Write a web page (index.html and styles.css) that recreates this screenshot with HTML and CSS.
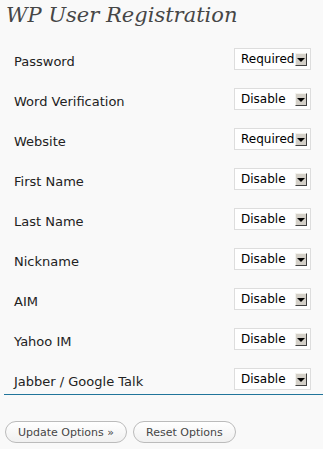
FILE: index.html
```html
<!DOCTYPE html>
<html lang="en">
<head>
    <meta charset="UTF-8">
    <meta name="viewport" content="width=device-width, initial-scale=1.0">
    <title>WP User Registration</title>
    <link rel="stylesheet" href="styles.css">
</head>
<body>
    <div class="wrap">
        <h2>WP User Registration</h2>
        <form class="options-form">
            <div class="form-table">
                <div class="form-row">
                    <label for="password">Password</label>
                    <span class="select-box">
                        <select id="password"><option>Required</option><option>Disable</option></select>
                        <span class="arrow"></span>
                    </span>
                </div>
                <div class="form-row">
                    <label for="word_verify">Word Verification</label>
                    <span class="select-box">
                        <select id="word_verify"><option>Disable</option><option>Required</option></select>
                        <span class="arrow"></span>
                    </span>
                </div>
                <div class="form-row">
                    <label for="website">Website</label>
                    <span class="select-box">
                        <select id="website"><option>Required</option><option>Disable</option></select>
                        <span class="arrow"></span>
                    </span>
                </div>
                <div class="form-row">
                    <label for="first_name">First Name</label>
                    <span class="select-box">
                        <select id="first_name"><option>Disable</option><option>Required</option></select>
                        <span class="arrow"></span>
                    </span>
                </div>
                <div class="form-row">
                    <label for="last_name">Last Name</label>
                    <span class="select-box">
                        <select id="last_name"><option>Disable</option><option>Required</option></select>
                        <span class="arrow"></span>
                    </span>
                </div>
                <div class="form-row">
                    <label for="nickname">Nickname</label>
                    <span class="select-box">
                        <select id="nickname"><option>Disable</option><option>Required</option></select>
                        <span class="arrow"></span>
                    </span>
                </div>
                <div class="form-row">
                    <label for="aim">AIM</label>
                    <span class="select-box">
                        <select id="aim"><option>Disable</option><option>Required</option></select>
                        <span class="arrow"></span>
                    </span>
                </div>
                <div class="form-row">
                    <label for="yim">Yahoo IM</label>
                    <span class="select-box">
                        <select id="yim"><option>Disable</option><option>Required</option></select>
                        <span class="arrow"></span>
                    </span>
                </div>
                <div class="form-row">
                    <label for="jabber">Jabber / Google Talk</label>
                    <span class="select-box">
                        <select id="jabber"><option>Disable</option><option>Required</option></select>
                        <span class="arrow"></span>
                    </span>
                </div>
            </div>
            <div class="submit">
                <button type="submit" class="button">Update Options &raquo;</button>
                <button type="reset" class="button">Reset Options</button>
            </div>
        </form>
    </div>
</body>
</html>
```

FILE: styles.css
```css
body {
    margin: 0;
    padding: 0;
    background: #f9f9f9;
    color: #333;
    font-family: "DejaVu Sans", Verdana, sans-serif;
}

.wrap {
    padding-left: 4px;
}

h2 {
    margin: 0;
    padding: 1px 0 0 2px;
    font-family: "DejaVu Serif", Georgia, serif;
    font-style: italic;
    font-weight: normal;
    font-size: 21px;
    line-height: 28px;
    color: #464646;
}

.form-table {
    display: flex;
    flex-direction: column;
    gap: 18px;
    padding: 19px 12px 4px 10px;
    border-bottom: 1px solid #21759b;
}

.form-row {
    display: flex;
    justify-content: space-between;
    align-items: center;
    height: 22px;
}

.form-row label {
    font-size: 13px;
    padding-top: 5px;
    color: #222;
}

.select-box {
    position: relative;
    display: block;
}

.select-box select {
    appearance: none;
    -webkit-appearance: none;
    display: block;
    width: 77px;
    height: 22px;
    margin: 0;
    padding: 0 0 0 6px;
    border: 1px solid #ddd;
    border-radius: 0;
    background: #fff;
    font-family: "DejaVu Sans", Tahoma, sans-serif;
    font-size: 12px;
    color: #000;
}

.select-box .arrow {
    position: absolute;
    top: 5px;
    right: 4px;
    width: 10px;
    height: 11px;
    background: #d4d0c8;
    border-top: 1px solid #f4f3ee;
    border-left: 1px solid #f4f3ee;
    border-right: 1px solid #404040;
    border-bottom: 1px solid #404040;
    pointer-events: none;
}

.select-box .arrow::after {
    content: "";
    position: absolute;
    left: 1px;
    top: 4px;
    border-left: 4px solid transparent;
    border-right: 4px solid transparent;
    border-top: 4px solid #000;
}

.submit {
    display: flex;
    gap: 6px;
    padding: 26px 0 0 1px;
}

.button {
    height: 22px;
    padding: 0 12px;
    border: 1px solid #bbb;
    border-radius: 11px;
    background: linear-gradient(#fff, #f0f0f0);
    font-family: "DejaVu Sans", Verdana, sans-serif;
    font-size: 11px;
    color: #464646;
    cursor: pointer;
}
```
